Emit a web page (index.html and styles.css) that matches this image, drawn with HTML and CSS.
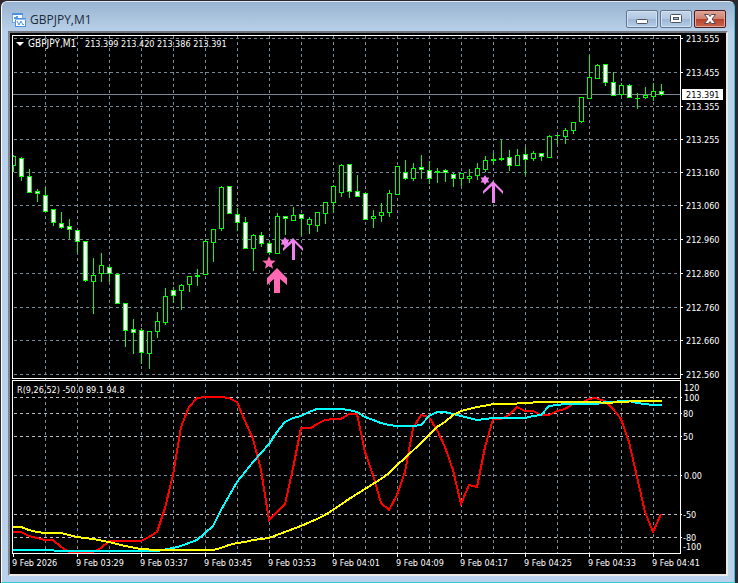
FILE: index.html
```html
<!DOCTYPE html>
<html lang="en">
<head>
    <meta charset="utf-8">
    <title>GBPJPY,M1</title>
    <link rel="stylesheet" href="styles.css">
</head>
<body>
<div class="window">
    <header class="titlebar">
        <svg class="app-icon" width="16" height="16" viewBox="0 0 16 16" shape-rendering="crispEdges">
            <rect x="1.5" y="1.5" width="10" height="9" fill="#fff" stroke="#6ea6ea"/>
            <path d="M1 2h11" stroke="#4f90e0" stroke-width="2"/>
            <path d="M3 7l1-2 1 2 1-3 1 2h2" fill="none" stroke="#5b9be6"/>
            <rect x="4.5" y="6.5" width="10" height="8" fill="#fff" stroke="#4f90e0"/>
            <path d="M4 7h11" stroke="#8fbdf2"/>
            <path d="M6 9l2 4 2-4 2 4 1-1" fill="none" stroke="#4f90e0" shape-rendering="auto"/>
        </svg>
        <h1 class="title">GBPJPY,M1</h1>
        <div class="controls">
            <button type="button" class="control" aria-label="Minimize">
                <svg width="30" height="16" viewBox="0 0 30 16"><rect x="9.5" y="8.5" width="11" height="4" rx="1" fill="#fff" stroke="#4b5361"/></svg>
            </button>
            <button type="button" class="control" aria-label="Restore">
                <svg width="30" height="16" viewBox="0 0 30 16"><rect x="9.5" y="3.5" width="11" height="8" rx="1" fill="#fff" stroke="#4b5361"/><rect x="12.5" y="6.5" width="5" height="2" fill="#a9bdd6" stroke="#4b5361"/></svg>
            </button>
            <button type="button" class="control close" aria-label="Close">
                <svg width="30" height="16" viewBox="0 0 30 16"><path d="M9.5 3.5h4l1.500 2 1.500-2h4l-3.500 4.500 3.500 4.500h-4l-1.500-2-1.500 2h-4l3.500-4.500z" fill="#fff" stroke="#5c4650"/></svg>
            </button>
        </div>
    </header>
    <main class="client">
        <svg class="chart" id="chart" viewBox="10 33 716 541" role="img" aria-label="GBPJPY one minute chart">
            <defs>
                <clipPath id="mainClip"><rect x="13" y="36" width="667" height="342"/></clipPath>
            </defs>
            <g id="grid" shape-rendering="crispEdges"></g>
            <g id="candles" shape-rendering="crispEdges" clip-path="url(#mainClip)"></g>
            <g id="signals"></g>
            <g id="lines" shape-rendering="crispEdges"></g>
            <g class="frame" shape-rendering="crispEdges">
                <rect x="12.5" y="35.5" width="668" height="343"/>
                <rect x="12.5" y="380.5" width="668" height="173"/>
            </g>
            <g id="labels">
                <path d="M16 42h8l-4 4z" fill="#fff"/>
                <text class="symbol" x="28" y="47">GBPJPY,M1</text>
                <text x="85" y="47">213.399 213.420 213.386 213.391</text>
                <text x="17" y="393">R(9,26,52) -50.0 89.1 94.8</text>
            </g>
            <rect x="682" y="89" width="41" height="11" fill="#fff"/>
            <text class="price-now" x="686" y="98">213.391</text>
        </svg>
    </main>
</div>
<script>
    const NS = 'http://www.w3.org/2000/svg';

    function add(parent, tag, attrs, text) {
        const el = document.createElementNS(NS, tag);
        for (const key in attrs) {
            el.setAttribute(key, attrs[key]);
        }
        if (text) {
            el.textContent = text;
        }
        document.getElementById(parent).appendChild(el);
    }

    // [high, body top, body bottom, low, kind]  u = up, d = down
    const candles = [
        [155,156,166,172,'u'],[157,158,177,181,'d'],[169,176,193,193,'d'],[189,191,194,202,'d'],
        [187,195,212,213,'d'],[209,209,223,226,'d'],[212,223,228,229,'d'],[219,226,230,239,'d'],
        [230,230,242,253,'d'],[241,241,281,282,'d'],[258,275,282,314,'u'],[253,265,274,282,'u'],
        [266,267,274,282,'d'],[273,274,304,304,'d'],[303,303,331,347,'d'],[319,329,333,354,'d'],
        [328,330,353,364,'d'],[331,331,354,369,'u'],[312,321,332,338,'u'],[288,296,323,325,'u'],
        [287,290,296,303,'d'],[284,285,291,310,'u'],[276,276,285,292,'u'],[269,275,277,286,'u'],
        [239,241,275,275,'u'],[229,229,243,262,'u'],[186,187,229,231,'u'],[186,186,214,214,'d'],
        [208,214,223,231,'d'],[217,222,249,249,'d'],[234,235,249,271,'u'],[232,235,244,247,'d'],
        [241,243,253,255,'d'],[213,216,254,254,'u'],[216,216,219,235,'d'],[207,215,221,221,'u'],
        [214,214,219,236,'d'],[217,219,225,234,'u'],[212,212,226,232,'u'],[202,202,214,224,'u'],
        [185,186,203,213,'u'],[164,165,193,197,'u'],[164,164,192,198,'d'],[175,191,197,197,'d'],
        [193,193,220,220,'d'],[210,216,219,228,'u'],[203,212,216,222,'u'],[190,193,213,217,'u'],
        [166,166,195,195,'u'],[160,172,179,180,'d'],[163,168,179,181,'u'],[155,167,170,179,'d'],
        [161,170,179,184,'d'],[168,171,173,183,'u'],[169,170,173,182,'d'],[173,174,179,187,'d'],
        [173,173,179,186,'u'],[169,176,179,183,'u'],[163,168,176,180,'u'],[156,160,170,172,'u'],
        [153,159,161,165,'u'],[140,158,160,161,'u'],[150,157,166,171,'d'],[149,155,166,166,'u'],
        [147,154,160,175,'d'],[151,153,159,161,'u'],[153,153,157,161,'d'],[135,136,158,158,'u'],
        [135,135,136,144,'u'],[128,130,137,144,'u'],[122,122,131,134,'u'],[97,97,122,123,'u'],
        [55,77,99,99,'u'],[64,65,79,79,'u'],[64,64,83,86,'d'],[72,82,96,96,'d'],
        [83,85,95,96,'u'],[84,85,98,98,'d'],[93,98,99,109,'u'],[87,95,98,99,'u'],
        [83,91,97,101,'u'],[84,91,95,96,'d']
    ];

    const prices = [
        [38,'213.555'],[72,'213.455'],[106,'213.355'],[139,'213.255'],[172,'213.160'],[205,'213.060'],
        [239,'212.960'],[273,'212.860'],[307,'212.760'],[340,'212.660'],[374,'212.560']
    ];
    const levels = [
        [387,'120',684],[397,'100',684],[413,'80',683],[436,'50',683],[475,'0.00',684],
        [514,'-50',683],[537,'-80',683],[546,'-100',683]
    ];
    const times = ['2026','03:29','03:37','03:45','03:53','04:01','04:09','04:17','04:25','04:33','04:41'];

    const red = '13,532 21,532 29,536 37,538 45,540 53,540 61,547 69,552 93,552 101,548 109,541 141,541 149,537 157,532 165,508 173,475 181,427 189,407 197,398 205,397 221,397 229,398 237,402 245,421 253,439 261,470 269,520 277,512 285,504 293,468 301,428 311,428 317,424 325,420 333,419 341,419 349,414 357,414 365,452 373,475 381,503 389,510 397,495 405,472 413,428 421,415 429,417 437,430 445,447 453,470 461,504 469,485 477,487 485,447 493,419 501,419 509,415 517,407 525,411 533,411 541,415 549,415 557,411 565,409 573,404 581,403 589,399 595,398 605,401 613,409 621,419 629,442 637,477 645,512 653,532 661,514';
    const aqua = '13,550 53,550 55,551 157,551 173,548 181,546 189,543 197,540 205,533 213,526 221,510 229,496 237,482 245,472 253,462 261,453 269,444 277,432 285,422 293,418 301,416 309,412 317,409 341,409 349,410 357,412 365,417 373,420 381,423 389,425 397,426 413,426 421,425 429,416 437,412 445,412 453,414 461,416 469,418 477,420 485,419 493,418 525,418 533,416 541,415 549,406 557,405 565,404 597,404 605,402 629,401 637,403 645,404 653,405 662,405';
    const yellow = '13,527 21,527 29,530 37,532 45,533 61,533 77,537 93,539 109,542 125,546 141,549 157,550 213,550 221,548 229,545 237,543 245,542 253,540 269,538 277,535 285,532 301,526 317,519 325,515 333,510 349,499 365,489 381,479 389,473 397,465 405,458 421,443 429,435 437,427 445,422 453,415 461,411 469,409 477,407 489,405 493,404 509,404 525,403 541,402 597,402 605,403 621,402 637,401 662,401';

    // grid
    for (let x = 45; x < 680; x += 32) {
        add('grid', 'path', {class: 'dash', d: 'M' + (x + 0.5) + ' 36V553'});
    }
    prices.forEach(function ([y, label]) {
        add('grid', 'path', {class: 'dash', d: 'M14 ' + (y + 0.5) + 'H680'});
        add('grid', 'path', {class: 'tick', d: 'M681 ' + (y + 0.5) + 'h2'});
        add('labels', 'text', {x: 686, y: y + 4}, label);
    });
    levels.forEach(function ([y, label, x]) {
        if (label !== '120' && label !== '-100') {
            add('grid', 'path', {class: label === '0.00' ? 'dash' : 'dash level', d: 'M14 ' + (y + 0.5) + 'H680'});
            add('grid', 'path', {class: 'tick', d: 'M681 ' + (y + 0.5) + 'h1'});
        }
        add('labels', 'text', {x: x, y: y + 4}, label);
    });
    times.forEach(function (t, i) {
        add('grid', 'path', {class: 'tick', d: 'M' + (13.5 + i * 64) + ' 554v3'});
        add('labels', 'text', {x: 12 + i * 64, y: 566}, '9 Feb ' + t);
    });
    add('grid', 'path', {class: 'current', d: 'M13 94.5H680'});

    // candles
    candles.forEach(function ([high, top, bottom, low, kind], i) {
        const x = 13 + i * 8;
        add('candles', 'rect', {x: x, y: high, width: 1, height: low - high, fill: '#0f0'});
        add('candles', 'rect', {x: x - 2, y: top, width: 5, height: bottom - top, fill: '#0f0'});
        if (bottom - top > 2) {
            add('candles', 'rect', {x: x - 1, y: top + 1, width: 3, height: bottom - top - 2, fill: kind === 'd' ? '#fff' : '#000'});
        }
    });

    // signal arrows and stars
    function star(cx, cy, points, outer, inner, color) {
        let d = '';
        for (let i = 0; i < points * 2; i++) {
            const r = i % 2 ? inner : outer;
            const a = Math.PI * i / points - Math.PI / 2;
            d += (i ? 'L' : 'M') + (cx + r * Math.cos(a)).toFixed(1) + ' ' + (cy + r * Math.sin(a)).toFixed(1);
        }
        add('signals', 'path', {d: d + 'z', fill: color});
    }
    function thinArrow(x, y) {
        add('signals', 'path', {
            d: 'M' + x + ' ' + y + 'l10 10v3l-8-8v17h-3v-17l-9 8v-3z',
            fill: 'violet'
        });
    }
    star(269, 263, 5, 7, 3, 'hotpink');
    star(285, 242, 6, 5, 3, 'violet');
    star(485, 180, 6, 5, 3, 'violet');
    thinArrow(293, 238);
    thinArrow(493, 181);
    add('signals', 'path', {d: 'M277 268l10 10v7l-7-6v14h-6v-14l-7 6v-7z', fill: 'hotpink'});

    // indicator
    add('lines', 'polyline', {points: red, stroke: '#f00'});
    add('lines', 'polyline', {points: aqua, stroke: '#0ff'});
    add('lines', 'polyline', {points: yellow, stroke: '#ff0'});
</script>
</body>
</html>
```
FILE: styles.css
```css
* {
    box-sizing: border-box;
}

body {
    margin: 0;
    padding: 1px 3px 0 1px;
    background: #2b2830;
    font-family: "Open Sans", "Noto Sans", sans-serif;
}

.window {
    padding: 0 6px 6px 6px;
    background: linear-gradient(#99b4d1 0, #b9d1ea 30px, #b9d1ea 100%);
    border-left: 1px solid #fff;
    border-top: 1px solid #dfe9f5;
    border-right: 1px solid #35c6dc;
    border-bottom: 1px solid #35c6dc;
    border-radius: 6px 6px 0 0;
}

.titlebar {
    display: flex;
    align-items: center;
    height: 29px;
    padding: 6px 2px 0 3px;
}

.app-icon {
    margin-top: 1px;
}

.title {
    flex: 1;
    margin: 0 0 0 3px;
    font-size: 12px;
    line-height: 16px;
    font-weight: normal;
    color: #1e2a3a;
}

.controls {
    display: flex;
    gap: 2px;
    margin-bottom: 2px;
}

.control {
    width: 32px;
    height: 18px;
    padding: 0;
    border: 1px solid #5f7590;
    border-radius: 2px;
    background: linear-gradient(#c3d5ea 0, #b3c8e1 48%, #9bb5d3 50%, #b5cee8 100%);
    box-shadow: inset 0 0 0 1px #d3e1f1;
}

.control svg {
    display: block;
}

.control.close {
    border-color: #4e1a22;
    background: linear-gradient(#dda495 0, #cf8272 48%, #b6402a 50%, #c9654c 100%);
    box-shadow: inset 0 0 0 1px #dfa89c;
}

.client {
    border-top: 2px solid #70747c;
    border-left: 2px solid #80848c;
    border-right: 2px solid #ece9e6;
    border-bottom: 2px solid #ece9e6;
    background: #000;
}

.chart {
    display: block;
    width: 100%;
    height: auto;
}

.chart text {
    fill: #fff;
    font-family: "DejaVu Sans Condensed", "DejaVu Sans", sans-serif;
    font-size: 9px;
}

.chart .symbol {
    font-size: 10px;
}

.chart .price-now {
    fill: #000;
}

.dash {
    stroke: #778899;
    stroke-dasharray: 3 3;
}

.level {
    stroke: #c0c0c0;
}

.current {
    stroke: #778899;
}

.tick {
    stroke: #fff;
}

.frame rect {
    fill: none;
    stroke: #fff;
}

#lines polyline {
    fill: none;
    stroke-width: 2px;
}
```
